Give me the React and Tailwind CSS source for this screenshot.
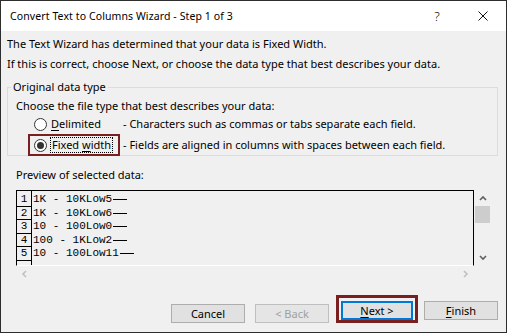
import React from "react";

const rows = ["1K - 10KLow5", "1K - 10KLow6", "10 - 100Low0", "100 - 1KLow2", "10 - 100Low11"];

function Chevron({ dir, color }) {
  const pts = {
    up: "1,5 4,2 7,5",
    down: "1,2 4,5 7,2",
    left: "5,1 2,4 5,7",
    right: "2,1 5,4 2,7",
  }[dir];
  return (
    <svg width="8" height="8" viewBox="0 0 8 8" className="block">
      <polyline points={pts} fill="none" stroke={color} strokeWidth="1.6" />
    </svg>
  );
}

function Radio({ checked }) {
  return (
    <span className="w-[13px] h-[13px] rounded-full border border-[#333] bg-white flex items-center justify-center shrink-0">
      {checked && <span className="w-[7px] h-[7px] rounded-full bg-[#333]" />}
    </span>
  );
}

function Button({ children, disabled, focused }) {
  return (
    <button
      type="button"
      className={
        focused
          ? "w-[72px] h-[19px] border-2 border-[#0078d7] bg-[#e1e1e1] text-black flex items-center justify-center"
          : disabled
          ? "w-[74px] h-[19px] border border-[#bfbfbf] bg-[#e5e5e5] text-[#a0a0a0] flex items-center justify-center"
          : "w-[74px] h-[19px] border border-[#adadad] bg-[#e1e1e1] text-black flex items-center justify-center"
      }
    >
      {children}
    </button>
  );
}

export default function App() {
  return (
    <div className="w-[507px] h-[333px] border border-[#2d2d2d] bg-[#f0f0f0] flex flex-col overflow-hidden font-['Noto_Sans',sans-serif] text-[11px] leading-[18px] text-black">
      <div className="h-[30px] shrink-0 bg-white flex items-center pl-[9px]">
        <span className="flex-1 text-[10.5px] tracking-[0.1px]">Convert Text to Columns Wizard - Step 1 of 3</span>
        <span className="w-[46px] text-center text-[13px] font-light">?</span>
        <span className="w-[46px] flex justify-center">
          <svg width="10" height="10" viewBox="0 0 10 10">
            <path d="M0.5 0.5 L9.5 9.5 M9.5 0.5 L0.5 9.5" stroke="#111" strokeWidth="1" />
          </svg>
        </span>
      </div>

      <div className="flex-1 flex flex-col pl-[6px] pr-[8px]">
        <p className="mt-[4px]">The Text Wizard has determined that your data is Fixed Width.</p>
        <p className="mt-[2px]">If this is correct, choose Next, or choose the data type that best describes your data.</p>

        <fieldset className="mt-[5px] border border-[#dcdcdc] pl-[8px] h-[78px]">
          <legend className="-ml-[5px] px-[2px]">Original data type</legend>
          <p className="mt-px">Choose the file type that best describes your data:</p>
          <div className="flex items-center h-[18px]">
            <div className="w-[107px] flex items-center pl-[18px] gap-[4px]">
              <Radio />
              <span>
                <span className="underline underline-offset-2">D</span>elimited
              </span>
            </div>
            <span>- Characters such as commas or tabs separate each field.</span>
          </div>
          <div className="flex items-center mt-px">
            <div className="ml-[12px] w-[92px] h-[22px] border-2 border-[#7a1f1f] flex items-center pl-[4px] gap-[3px] whitespace-nowrap">
              <Radio checked />
              <span className="border border-dotted border-black px-px leading-[14px]">
                Fixed <span className="underline underline-offset-2">w</span>idth
              </span>
            </div>
            <span className="ml-[3px]">- Fields are aligned in columns with spaces between each field.</span>
          </div>
        </fieldset>

        <p className="mt-[10px] ml-[9px]">Preview of selected data:</p>

        <div className="mt-[6px] ml-[9px] w-[475px] flex flex-col">
          <div className="flex h-[76px]">
            <div className="flex-1 border-t border-l border-r border-black border-b-white border-b flex overflow-hidden font-['Liberation_Mono',monospace] text-[11px] leading-[13.5px]">
              <div className="w-[15px] border-r border-black flex flex-col">
                <div className="h-[2px] shrink-0" />
                {[1, 2, 3, 4, 5, 6].map((n) => (
                  <div key={n} className="h-[13.5px] shrink-0 border-b border-black text-center">
                    {n <= 5 ? n : ""}
                  </div>
                ))}
              </div>
              <div className="pl-[1px] pt-[2px] flex flex-col">
                {rows.map((r) => (
                  <div key={r} className="h-[13.5px] flex items-center whitespace-pre">
                    {r}
                    <span className="inline-block w-[14px] h-px bg-black ml-[1px]" />
                  </div>
                ))}
              </div>
            </div>
            <div className="w-[17px] flex flex-col items-center pt-[5px] pb-[4px]">
              <Chevron dir="up" color="#606060" />
              <div className="mt-[3px] w-[15px] h-[17px] bg-[#cdcdcd]" />
              <div className="flex-1" />
              <Chevron dir="down" color="#606060" />
            </div>
          </div>
          <div className="h-[16px] flex items-center justify-between pl-[5px] pr-[21px]">
            <Chevron dir="left" color="#c0c0c0" />
            <Chevron dir="right" color="#c0c0c0" />
          </div>
        </div>

        <div className="mt-auto mb-[9px] flex items-end justify-end">
          <Button>Cancel</Button>
          <div className="ml-[10px]">
            <Button disabled>&lt; Back</Button>
          </div>
          <div className="ml-[7px] border-[3px] border-[#7a1f1f] pt-[3px] px-[2px]">
            <Button focused>
              <span>
                <span className="underline underline-offset-2">N</span>ext &gt;
              </span>
            </Button>
          </div>
          <div className="ml-[6px] mb-[3px]">
            <Button>
              <span>
                <span className="underline underline-offset-2">F</span>inish
              </span>
            </Button>
          </div>
        </div>
      </div>
    </div>
  );
}
